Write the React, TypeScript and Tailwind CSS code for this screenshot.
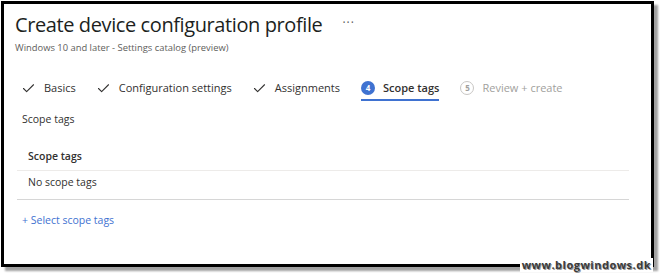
import { Check } from "lucide-react"

const steps = [
  { label: "Basics", state: "done" },
  { label: "Configuration settings", state: "done" },
  { label: "Assignments", state: "done" },
  { label: "Scope tags", state: "active", n: 4 },
  { label: "Review + create", state: "todo", n: 5 },
]

function Step({ label, state, n }: { label: string; state: string; n?: number }) {
  if (state === "done") {
    return (
      <div className="flex items-center gap-[8px] text-[11px] leading-[16px] text-[#323130]">
        <Check className="-ml-[1px] h-[15px] w-[15px]" strokeWidth={1.7} />
        <span>{label}</span>
      </div>
    )
  }
  const active = state === "active"
  return (
    <div className={`relative flex items-center gap-[8px] text-[11px] leading-[16px] ${active ? "font-semibold text-[#323130]" : "text-[#a19f9d]"}`}>
      <span
        className={`flex h-[14px] w-[14px] items-center justify-center rounded-full text-[8px] font-bold ${
          active ? "bg-[#3f72d1] text-white" : "border border-[#c8c6c4] text-[#a19f9d]"
        }`}
      >
        {n}
      </span>
      <span>{label}</span>
      {active && <span className="absolute -bottom-[5px] left-0 right-0 h-[2px] bg-[#3f72d1]" />}
    </div>
  )
}

export default function App() {
  return (
    <div className="relative h-[275px] w-[661px] overflow-hidden bg-white" style={{ fontFamily: "'Open Sans', 'Noto Sans', sans-serif" }}>
      <div className="ml-[1px] mt-[1px] h-[266px] w-[653px] border-[3px] border-black bg-white px-[11px] pt-[6px] shadow-[4px_4px_2px_#a0a0a0]">
        <div className="flex items-center">
          <h1 className="text-[20px] leading-[30px] tracking-[-0.4px] text-[#201f1e]">Create device configuration profile</h1>
          <span className="ml-[20px] mt-[-4px] text-[12px] tracking-[1px] text-[#605e5c]">···</span>
        </div>
        <div className="mt-[1px] text-[9.4px] leading-[13px] text-[#605e5c]">Windows 10 and later - Settings catalog (preview)</div>

        <div className="ml-[7px] mt-[26px] flex items-center gap-[21px]">
          {steps.map((s) => (
            <Step key={s.label} {...s} />
          ))}
        </div>

        <div className="ml-[7px] mt-[16px] text-[10.5px] text-[#323130]">Scope tags</div>

        <div className="ml-[2px] mr-[11px] mt-[21px]">
          <div className="border-b border-[#edebe9] px-[11px] pb-[5px] text-[10.5px] font-semibold text-[#323130]">Scope tags</div>
          <div className="border-b border-[#d6d6d6] px-[11px] pb-[9px] pt-[4px] text-[10.5px] leading-[15px] text-[#323130]">No scope tags</div>
        </div>

        <div className="ml-[7px] mt-[13px] text-[10.5px] leading-[15px] text-[#3f72d1]">+ Select scope tags</div>
      </div>
      <div className="absolute bottom-[3px] right-[8px] bg-white px-[2px] text-[11px] font-bold leading-[14px] tracking-[0.5px] text-[#3a3a3a]" style={{ textShadow: "1px 1px 0 #999" }}>
        www.blogwindows.dk
      </div>
    </div>
  )
}
